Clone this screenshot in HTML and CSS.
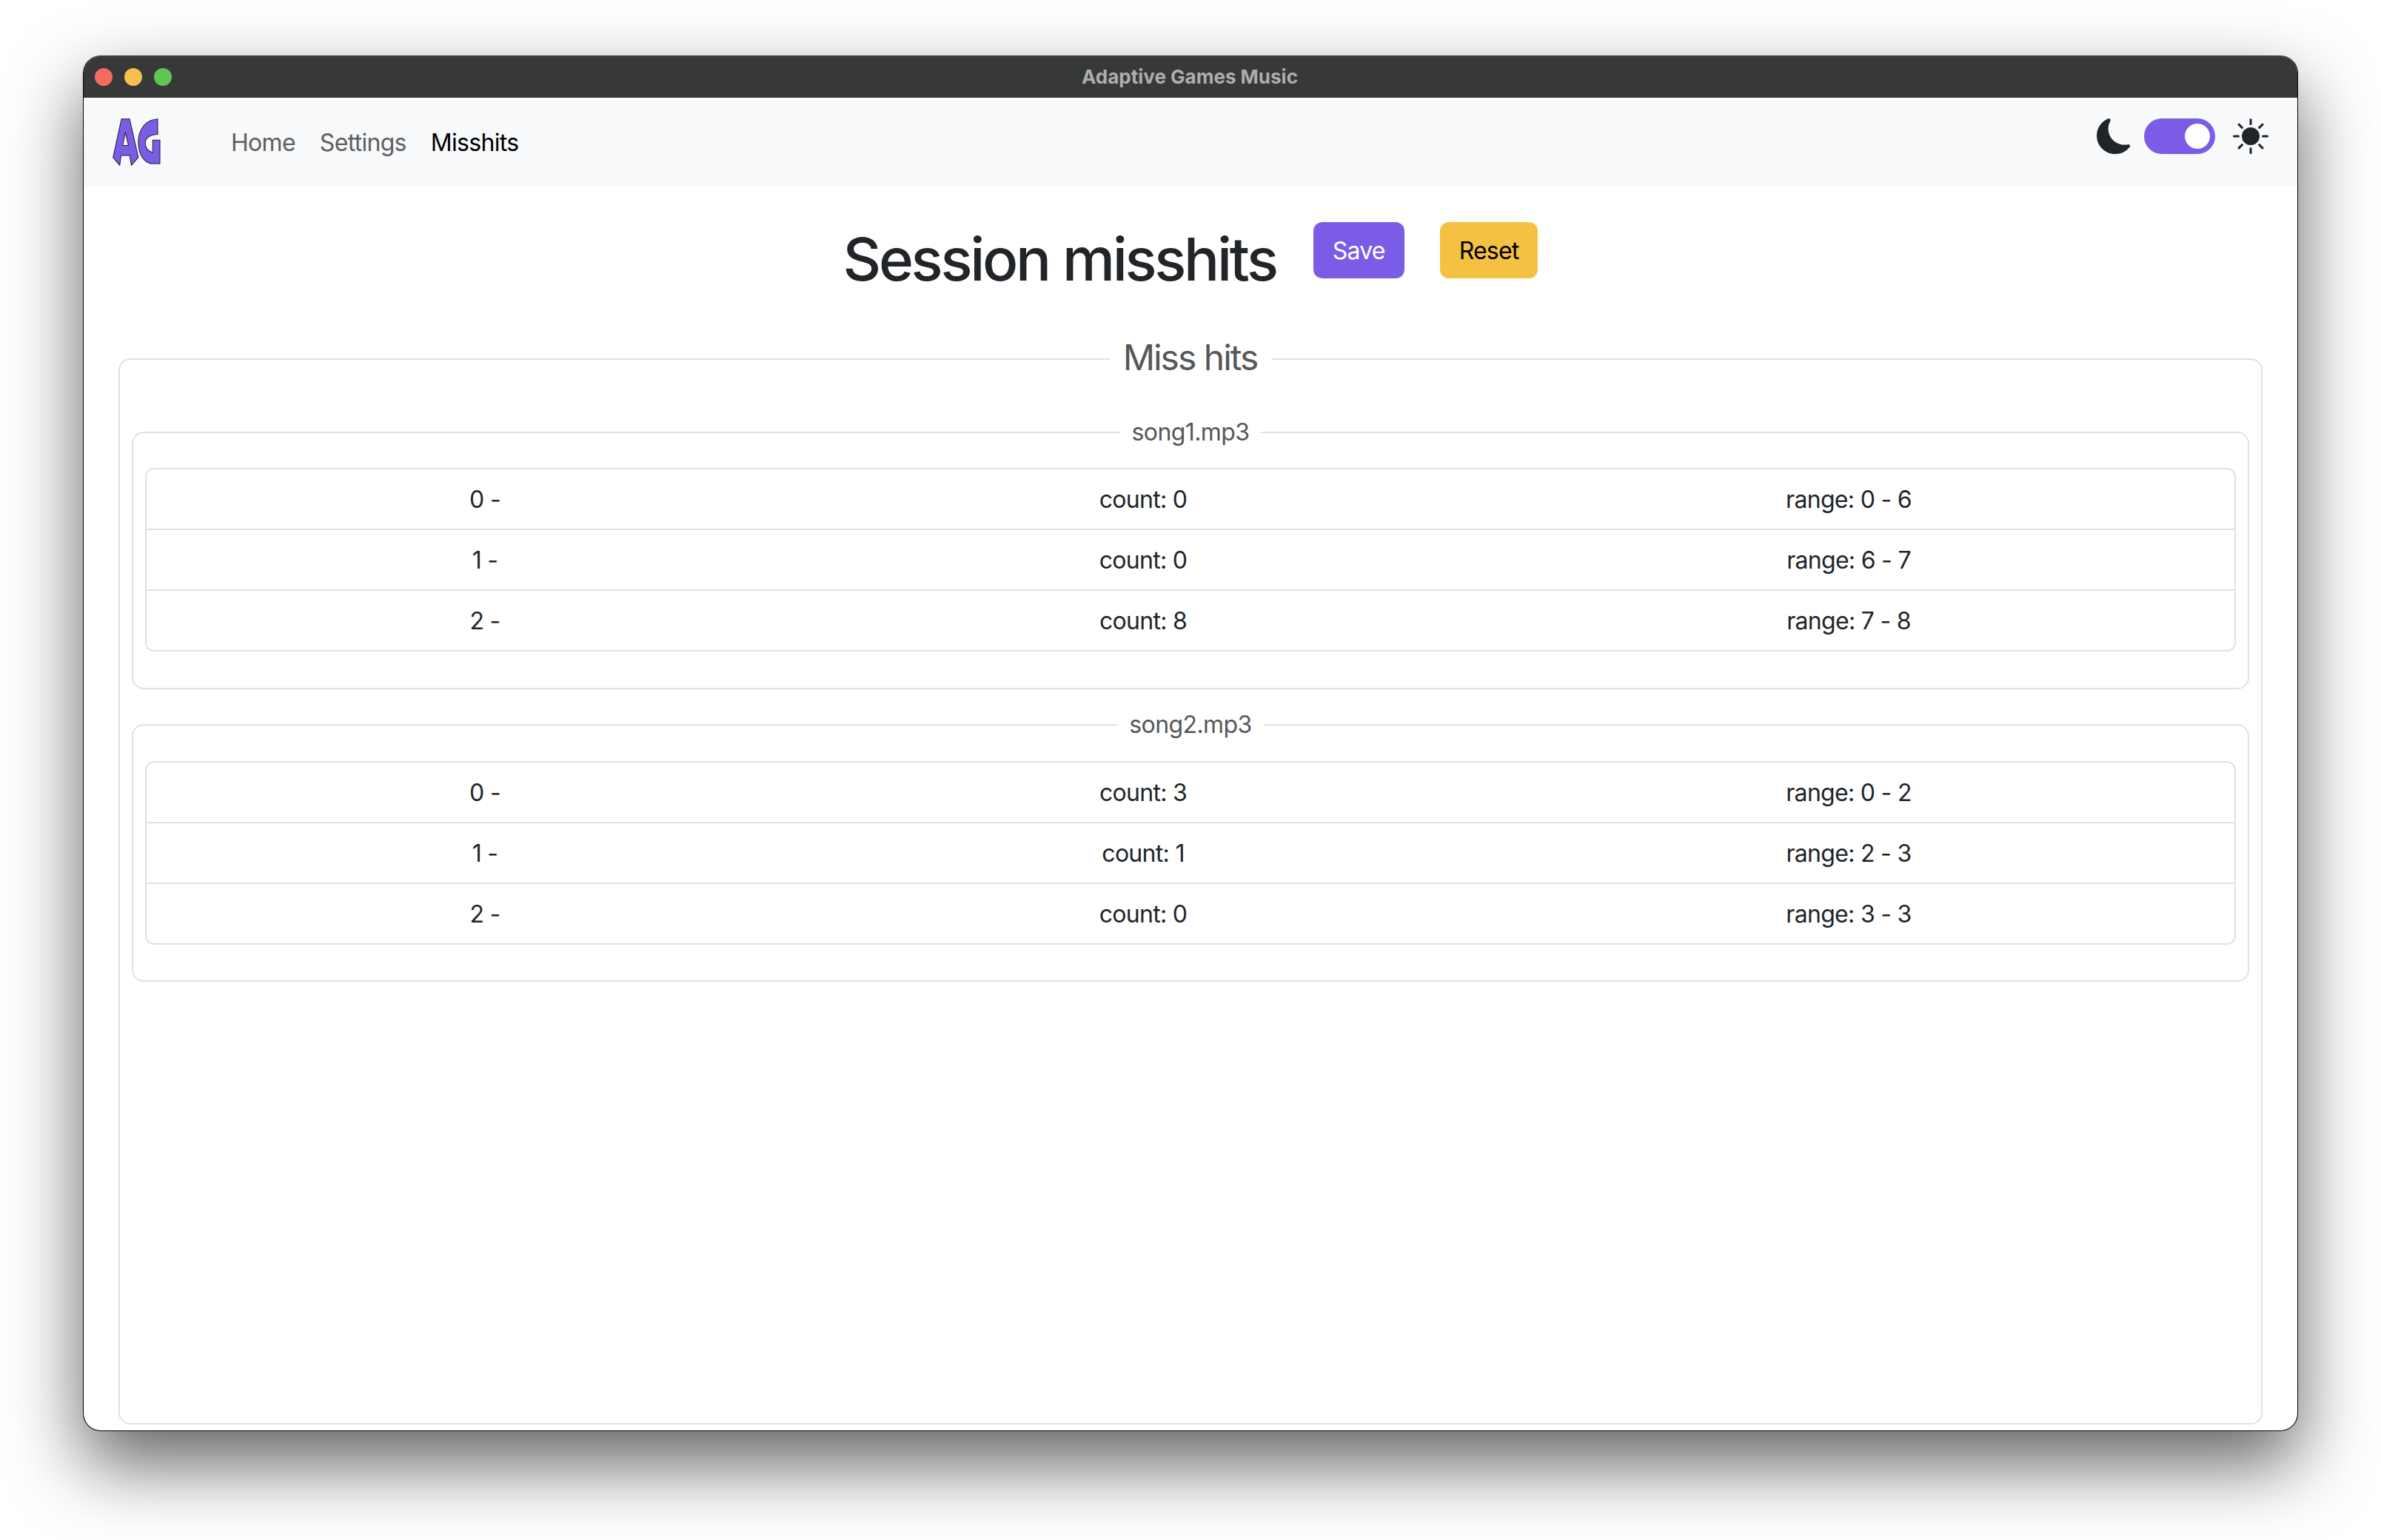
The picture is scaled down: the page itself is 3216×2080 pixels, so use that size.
FILE: index.html
```html
<!DOCTYPE html>
<html lang="en">
<head>
<meta charset="utf-8">
<title>Adaptive Games Music</title>
<link rel="stylesheet" href="styles.css">
</head>
<body>
<div class="window">
  <header class="titlebar">
    <div class="lights"><span class="light red"></span><span class="light yellow"></span><span class="light green"></span></div>
    <div class="title">Adaptive Games Music</div>
  </header>
  <nav class="navbar">
    <svg class="logo" viewBox="66 33 194 191" aria-label="AG logo">
      <path fill-rule="evenodd" d="M102 35H135L170 190L142 222L135 182H100L95 222L68 190ZM118 88L107 142H130Z"/>
      <path d="M248 35C200 38 170 75 170 130C170 175 190 205 218 215H257V120H228V170C208 165 198 150 198 130C198 110 220 97 248 97Z"/>
    </svg>
    <a class="navlink">Home</a>
    <a class="navlink">Settings</a>
    <a class="navlink active">Misshits</a>
    <div class="theme">
      <svg class="theme-icon" viewBox="0 0 16 16"><path d="M6 .278a.768.768 0 0 1 .08.858 7.208 7.208 0 0 0-.878 3.46c0 4.021 3.278 7.277 7.318 7.277.527 0 1.04-.055 1.533-.16a.787.787 0 0 1 .81.316.733.733 0 0 1-.031.893A8.349 8.349 0 0 1 8.344 16C3.734 16 0 12.286 0 7.71 0 4.266 2.114 1.312 5.124.06A.752.752 0 0 1 6 .278z"/></svg>
      <span class="switch"><span class="knob"></span></span>
      <svg class="theme-icon" viewBox="0 0 16 16"><path d="M8 12a4 4 0 1 0 0-8 4 4 0 0 0 0 8zM8 0a.5.5 0 0 1 .5.5v2a.5.5 0 0 1-1 0v-2A.5.5 0 0 1 8 0zm0 13a.5.5 0 0 1 .5.5v2a.5.5 0 0 1-1 0v-2A.5.5 0 0 1 8 13zm8-5a.5.5 0 0 1-.5.5h-2a.5.5 0 0 1 0-1h2a.5.5 0 0 1 .5.5zM3 8a.5.5 0 0 1-.5.5h-2a.5.5 0 0 1 0-1h2A.5.5 0 0 1 3 8zm10.657-5.657a.5.5 0 0 1 0 .707l-1.414 1.415a.5.5 0 1 1-.707-.708l1.414-1.414a.5.5 0 0 1 .707 0zm-9.193 9.193a.5.5 0 0 1 0 .707L3.05 13.657a.5.5 0 0 1-.707-.707l1.414-1.414a.5.5 0 0 1 .707 0zm9.193 2.121a.5.5 0 0 1-.707 0l-1.414-1.414a.5.5 0 0 1 .707-.707l1.414 1.414a.5.5 0 0 1 0 .707zM4.464 4.465a.5.5 0 0 1-.707 0L2.343 3.05a.5.5 0 1 1 .707-.707l1.414 1.414a.5.5 0 0 1 0 .708z"/></svg>
    </div>
  </nav>
  <main class="content">
    <div class="heading">
      <h1>Session misshits</h1>
      <button class="btn save">Save</button>
      <button class="btn reset">Reset</button>
    </div>
    <fieldset class="outer">
      <legend>Miss hits</legend>
      <fieldset class="song first">
        <legend>song1.mp3</legend>
        <div class="list">
          <div class="row"><span>0 -</span><span>count: 0</span><span>range: 0 - 6</span></div>
          <div class="row"><span>1 -</span><span>count: 0</span><span>range: 6 - 7</span></div>
          <div class="row"><span>2 -</span><span>count: 8</span><span>range: 7 - 8</span></div>
        </div>
      </fieldset>
      <fieldset class="song">
        <legend>song2.mp3</legend>
        <div class="list">
          <div class="row"><span>0 -</span><span>count: 3</span><span>range: 0 - 2</span></div>
          <div class="row"><span>1 -</span><span>count: 1</span><span>range: 2 - 3</span></div>
          <div class="row"><span>2 -</span><span>count: 0</span><span>range: 3 - 3</span></div>
        </div>
      </fieldset>
    </fieldset>
  </main>
</div>
</body>
</html>
```
FILE: styles.css
```css
* { box-sizing: border-box; }
html, body { margin: 0; padding: 0; background: #fff; }
body { height: 2080px; overflow: hidden; padding: 75px 112px 0; font-family: Inter, "Liberation Sans", sans-serif; color: #212529; }
.window {
  width: 2992px; height: 1858px; border: 1px solid #000; border-top-color: #222; border-radius: 24px;
  background: #fff; overflow: clip; display: flex; flex-direction: column;
  box-shadow: 0 44px 100px rgba(0,0,0,.62);
}
.titlebar {
  height: 56px; flex: none; background: #373838; display: flex; align-items: center; justify-content: center; position: relative;
  box-shadow: inset 0 1px 0 #4a4a4a;
}
.lights { position: absolute; left: 15px; top: 16px; display: flex; gap: 16px; }
.light { width: 24px; height: 24px; border-radius: 50%; }
.red { background: #f26d60; }
.yellow { background: #f6bf4f; }
.green { background: #61c554; }
.title { color: #adadad; font-size: 26px; font-weight: 700; line-height: 54px; margin-right: 2px; }
.navbar { height: 120px; flex: none; background: #f8f9fa; display: flex; align-items: center; padding-left: 39px; }
.logo { width: 65px; height: 64px; margin-right: 95px; fill: #7b5ce6; stroke: #1d1d2b; stroke-width: 3px; stroke-linejoin: miter; }
.navlink { font-size: 32px; line-height: 48px; color: #5e5f60; margin-right: 33px; letter-spacing: -.7px; padding-top: 2px; }
.navlink.active { color: #000; }
.theme { margin-left: auto; margin-right: 39px; margin-top: -16px; display: flex; align-items: center; gap: 24px; }
.theme-icon { width: 48px; height: 48px; fill: #212529; display: block; }
.theme-icon:first-child { margin-right: -8px; }
.switch { width: 96px; height: 48px; border-radius: 24px; background: #7b5ce6; display: flex; align-items: center; justify-content: flex-end; padding-right: 7px; }
.knob { width: 34px; height: 34px; border-radius: 50%; background: #fff; }
.content { flex: 1; min-height: 0; padding: 0 47px 8px; display: flex; flex-direction: column; }
.heading { display: flex; justify-content: center; align-items: flex-start; padding-top: 48px; height: 202px; flex: none; }
h1 { margin: 2px 50px 0 0; font-size: 80px; font-weight: 500; line-height: 96px; color: #212529; letter-spacing: -3.3px; }
.btn { border: 0; border-radius: 12px; height: 76px; font: 400 32px/48px Inter, "Liberation Sans", sans-serif; letter-spacing: -.8px; padding: 2px 26px 0; }
.save { background: #7b5ce6; color: #fff; margin-right: 48px; }
.reset { background: #f5c142; color: #000; }
fieldset { margin: 0; min-width: 0; border: 2px solid #dee2e6; border-radius: 16px; }
legend { text-align: center; color: #555759; margin: 0 auto; }
.outer { flex: 1; padding: 0 16px; }
.outer > legend { font-size: 48px; line-height: 58px; padding: 0 19px 4px 18px; letter-spacing: -2px; }
.song { padding: 0 16px 48px; }
.song.first { margin-top: 48px; padding-bottom: 49px; }
.song > legend { font-size: 32px; line-height: 40px; padding: 0 16px; letter-spacing: -.6px; }
.song + .song { margin-top: 28px; }
.list { margin-top: 29px; border: 2px solid #dee2e6; border-radius: 12px; }
.song.first .list { margin-top: 28px; }
.row { display: grid; grid-template-columns: 914px 864px 1fr; height: 80px; align-items: center; text-align: center; font-size: 32px; color: #212529; letter-spacing: -.7px; }
.row + .row { border-top: 2px solid #dee2e6; height: 82px; }
```
